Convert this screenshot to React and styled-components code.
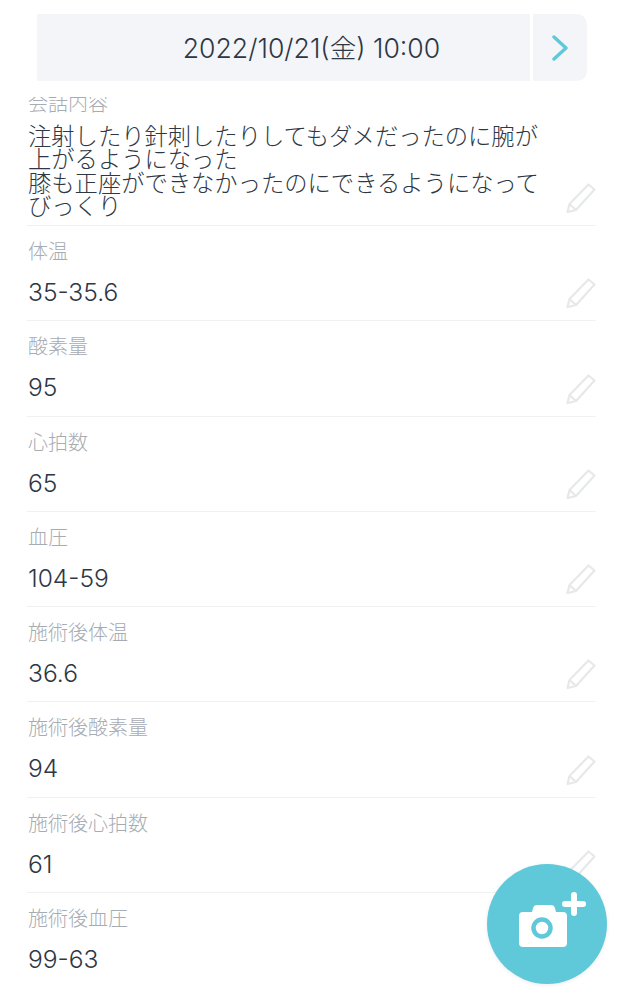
import styled, { createGlobalStyle } from "styled-components";

const rows = [
	{ label: "体温", value: "35-35.6" },
	{ label: "酸素量", value: "95" },
	{ label: "心拍数", value: "65" },
	{ label: "血圧", value: "104-59" },
	{ label: "施術後体温", value: "36.6" },
	{ label: "施術後酸素量", value: "94" },
	{ label: "施術後心拍数", value: "61" },
	{ label: "施術後血圧", value: "99-63" },
];

const talk = "注射したり針刺したりしてもダメだったのに腕が上がるようになった\n膝も正座ができなかったのにできるようになってびっくり";

function Pencil() {
	return (
		<svg width="30" height="30" viewBox="0 0 30 30" fill="none" stroke="#e6e8ea" strokeWidth="2.2" strokeLinejoin="round">
			<path d="M22.5 1.5 L28.5 6.5 L10 27 L1.5 29 L3.5 21 Z" />
			<path d="M3.5 21 L10 27" />
		</svg>
	);
}

function Row({ label, children }) {
	return (
		<Item>
			<Body>
				<Label>{label}</Label>
				<Value>{children}</Value>
			</Body>
			<EditButton>
				<Pencil />
			</EditButton>
		</Item>
	);
}

export default function App() {
	return (
		<Page>
			<GlobalStyle />
			<Header>
				<DateBox>2022/10/21(金) 10:00</DateBox>
				<NextButton>
					<svg width="18" height="26" viewBox="0 0 18 26" fill="none" stroke="#5fc9da" strokeWidth="3.4" strokeLinecap="round" strokeLinejoin="round">
						<path d="M3 2 L15 13 L3 24" />
					</svg>
				</NextButton>
			</Header>
			<List>
				<FirstItem>
					<Body>
						<FirstLabel>会話内容</FirstLabel>
						<TalkText>{talk}</TalkText>
					</Body>
					<EditButton>
						<Pencil />
					</EditButton>
				</FirstItem>
				{rows.map((r) => (
					<Row key={r.label} label={r.label}>
						{r.value}
					</Row>
				))}
			</List>
			<CameraFab>
				<svg width="68" height="56" viewBox="0 0 68 56" fill="none">
					<path
						fill="#fff"
						d="M13 20 L14 16 Q15 13 18 13 L32 13 Q35 13 36 16 L37 20 L44 20 Q48 20 48 24 L48 51 Q48 55 44 55 L4 55 Q0 55 0 51 L0 24 Q0 20 4 20 Z"
					/>
					<circle cx="23" cy="36" r="8.5" fill="#fff" stroke="#5fc9da" strokeWidth="4.5" />
					<path d="M55 3 V21 M46 12 H64" stroke="#fff" strokeWidth="6" strokeLinecap="round" />
				</svg>
			</CameraFab>
		</Page>
	);
}

const GlobalStyle = createGlobalStyle`
	html, body {
		margin: 0;
		padding: 0;
		background: #fff;
	}
	* {
		box-sizing: border-box;
	}
`;

const Page = styled.div`
	height: 100vh;
	display: flex;
	flex-direction: column;
	overflow: hidden;
	position: relative;
	font-family: "Inter", "Noto Sans CJK JP", sans-serif;
	color: #2e3744;
`;

const Header = styled.div`
	flex: none;
	display: flex;
	gap: 3px;
	height: 97px;
	padding: 14px 36px 16px 37px;
`;

const DateBox = styled.div`
	flex: 1;
	display: flex;
	align-items: center;
	justify-content: center;
	padding: 0 0 2px 56px;
	background: #f3f5f9;
	font-size: 26.6px;
	font-weight: 300;
`;

const NextButton = styled.div`
	width: 54px;
	display: flex;
	align-items: center;
	justify-content: center;
	background: #f3f5f9;
	border-radius: 0 10px 10px 0;
`;

const List = styled.div`
	flex: 1;
	overflow: hidden;
	padding: 0 27px;
`;

const Item = styled.div`
	display: flex;
	height: 95.25px;
	padding-left: 1px;
	border-bottom: 1px solid #f0f1f3;

	&:last-child {
		border-bottom: none;
	}
`;

const FirstItem = styled(Item)`
	height: auto;
	margin-top: -15px;
`;

const Body = styled.div`
	flex: 1;
	min-width: 0;
`;

const Label = styled.div`
	margin-top: 11px;
	font-size: 20px;
	line-height: 30px;
	font-weight: 300;
	color: #a7acb3;
`;

const FirstLabel = styled(Label)`
	margin-top: 7px;
`;

const Value = styled.div`
	margin-top: 5px;
	font-size: 24.6px;
	line-height: 40px;
	font-weight: 300;
`;

const TalkText = styled.div`
	margin-top: 6px;
	padding-bottom: 7px;
	max-width: 520px;
	font-size: 23.3px;
	line-height: 23.3px;
	font-weight: 300;
	white-space: pre-line;
`;

const EditButton = styled.div`
	flex: none;
	align-self: flex-end;
	width: 30px;
	height: 30px;
	margin-bottom: 12px;
`;

const CameraFab = styled.div`
	position: absolute;
	left: 487px;
	top: 864px;
	width: 120px;
	height: 120px;
	display: flex;
	align-items: center;
	justify-content: center;
	padding: 0 0 8px 12px;
	border-radius: 50%;
	background: #5fc9da;
	box-shadow: 0 1px 4px rgba(0, 0, 0, 0.08);
`;
